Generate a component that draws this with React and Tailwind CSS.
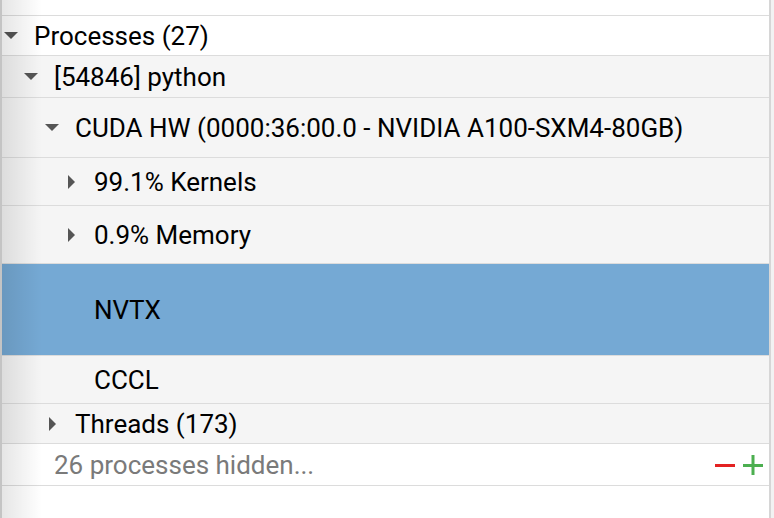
import React from "react";

const Down = () => (
  <svg width="14" height="8" viewBox="0 0 14 8" className="shrink-0">
    <path d="M0 0 L14 0 L7 7 Z" fill="#555" />
  </svg>
);

const Right = () => (
  <svg width="7" height="14" viewBox="0 0 7 14" className="shrink-0">
    <path d="M0 0 L7 7 L0 14 Z" fill="#555" />
  </svg>
);

const rows = [
  { label: "Processes (27)", h: "h-[40px]", pad: "pl-[2px]", icon: "down", iw: "w-[30px]", bg: "bg-white" },
  { label: "[54846] python", h: "h-[42px]", pad: "pl-[22px]", icon: "down", iw: "w-[30px]", bg: "bg-[#f5f5f5]" },
  { label: "CUDA HW (0000:36:00.0 - NVIDIA A100-SXM4-80GB)", h: "h-[60px]", pad: "pl-[43px]", icon: "down", iw: "w-[30px]", bg: "bg-[#f5f5f5]" },
  { label: "99.1% Kernels", h: "h-[48px]", pad: "pl-[66px]", icon: "right", iw: "w-[26px]", bg: "bg-[#f5f5f5]" },
  { label: "0.9% Memory", h: "h-[58px]", pad: "pl-[66px]", icon: "right", iw: "w-[26px]", bg: "bg-[#f5f5f5]" },
  { label: "NVTX", h: "h-[92px]", pad: "pl-[92px]", icon: null, bg: "bg-[#75a9d4]" },
  { label: "CCCL", h: "h-[48px]", pad: "pl-[92px]", icon: null, bg: "bg-[#f5f5f5]" },
  { label: "Threads (173)", h: "h-[40px]", pad: "pl-[47px]", icon: "right", iw: "w-[26px]", bg: "bg-[#f5f5f5]" },
];

const Row = ({ label, h, pad, icon, iw, bg }) => (
  <div className={`${h} ${bg} ${pad} flex items-center border-b border-[#dcdcdc]`}>
    {icon && (
      <div className={`${iw} flex items-center`}>
        {icon === "down" ? <Down /> : <Right />}
      </div>
    )}
    <span className="text-[26px] text-black leading-none whitespace-nowrap">{label}</span>
  </div>
);

export default function App() {
  return (
    <div className="w-[774px] h-[518px] bg-white flex overflow-hidden" style={{ fontFamily: "Roboto, 'Liberation Sans', sans-serif" }}>
      <div className="w-[2px] bg-[#c4c4c4]" />
      <div className="relative flex-1 flex flex-col">
        <div className="h-[16px] border-b border-[#dcdcdc] bg-white" />
        {rows.map((r) => (
          <Row key={r.label} {...r} />
        ))}
        <div className="h-[42px] flex items-center border-b border-[#dcdcdc] bg-white pl-[52px] pr-[6px]">
          <span className="text-[26px] text-[#7a7a7a] leading-none whitespace-nowrap">26 processes hidden...</span>
          <div className="ml-auto flex items-center gap-[8px]">
            <svg width="20" height="20" viewBox="0 0 20 20">
              <rect x="0" y="9" width="20" height="3" fill="#e32222" />
            </svg>
            <svg width="20" height="20" viewBox="0 0 20 20">
              <rect x="0" y="9" width="20" height="3" fill="#4caf50" />
              <rect x="8.5" y="0" width="3" height="20" fill="#4caf50" />
            </svg>
          </div>
        </div>
        <div className="flex-1 bg-white" />
        <div className="pointer-events-none absolute inset-y-0 left-0 w-[40px] bg-gradient-to-r from-black/10 to-transparent" />
      </div>
      <div className="w-[2px] bg-[#d6d6d6]" />
      <div className="w-[3px] bg-[#f2f2f2]" />
    </div>
  );
}
